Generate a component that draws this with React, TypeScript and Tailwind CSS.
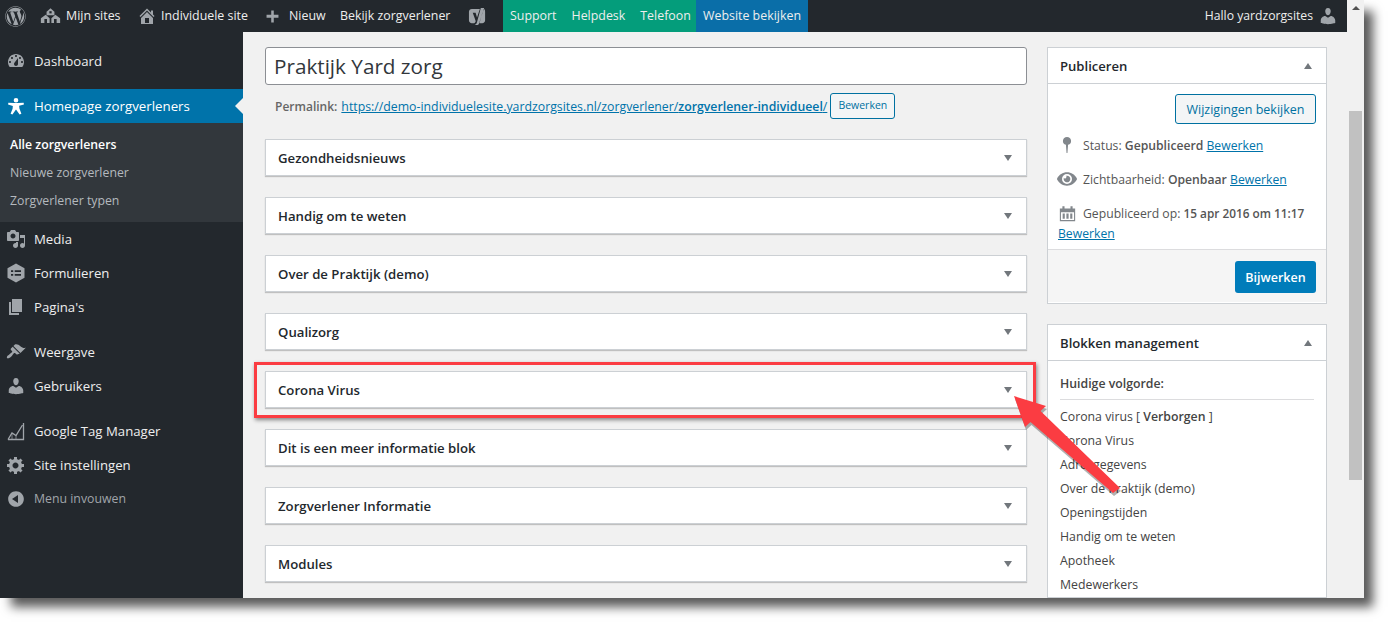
import React from 'react';
import { FaWordpress, FaEye } from 'react-icons/fa';

const font = "font-['Open_Sans','Noto_Sans',sans-serif]";

type IconProps = { className?: string };

// dashicons-style glyphs, the package icons are too far off for these
const icon = (d: string, viewBox = '0 0 20 20') => ({ className = '' }: IconProps) => (
  <svg viewBox={viewBox} className={className} fill="currentColor">
    <path fillRule="evenodd" d={d} />
  </svg>
);

const DashboardIcon = icon(
  'M3.76 16h12.48c1.1-1.37 1.76-3.11 1.76-5 0-4.42-3.58-8-8-8s-8 3.58-8 8c0 1.89.66 3.63 1.76 5zM10 4c.55 0 1 .45 1 1s-.45 1-1 1-1-.45-1-1 .45-1 1-1zM6 6c.55 0 1 .45 1 1s-.45 1-1 1-1-.45-1-1 .45-1 1-1zm8 0c.55 0 1 .45 1 1s-.45 1-1 1-1-.45-1-1 .45-1 1-1zm-5.37 5.55L12 7v6c0 1.1-.9 2-2 2s-2-.9-2-2c0-.57.24-1.08.63-1.45zM4 10c.55 0 1 .45 1 1s-.45 1-1 1-1-.45-1-1 .45-1 1-1zm12 0c.55 0 1 .45 1 1s-.45 1-1 1-1-.45-1-1 .45-1 1-1z'
);
const PersonIcon = icon(
  'M10 1a2.6 2.6 0 1 1 0 5.200A2.600 2.600 0 0 1 10 1zM1.500 6.500 7.500 6.800h5l6-.3.300 1.800-5.300 1.500.3 3L16 18.700l-2 .8-4-5.500-4 5.500-2-.8 2.200-5.700.3-3L1.200 8.300z'
);
const MediaIcon = icon(
  'M13 11V4c0-.55-.45-1-1-1h-1.670L9 1H5L3.670 3H2c-.55 0-1 .45-1 1v7c0 .55.45 1 1 1h10c.55 0 1-.45 1-1zM7 4.500c1.380 0 2.500 1.120 2.500 2.500S8.380 9.500 7 9.500 4.500 8.380 4.500 7 5.620 4.500 7 4.500zM14 6h5v10.500c0 1.380-1.120 2.500-2.500 2.500S14 17.880 14 16.500s1.120-2.500 2.500-2.500c.54 0 1 .2 1.500.5V9h-4V6zm-4 8.050V13h2v3.500c0 1.380-1.120 2.500-2.500 2.500S7 17.880 7 16.500 8.120 14 9.500 14c.16 0 .34.02.5.05z'
);
const FormsIcon = icon(
  'M10 .5l8.500 4.700v9.600L10 19.500l-8.500-4.700V5.200L10 .5zM5 7.200v1.900h2.200V7.200H5zm3.700 0v1.900H15V7.200H8.700zM5 10.900v1.900h2.200v-1.900H5zm3.700 0v1.900H15v-1.900H8.700z'
);
const PagesIcon = icon('M6 15V2h10v13H6zm-1 1h8v2H3V5h2v11z');
const BrushIcon = icon(
  'M14.48 11.06L7.41 3.99l1.5-1.5c.5-.56 2.3-.47 3.51.32 1.21.8 1.43 1.28 2.91 2.1 1.18.64 2.45 1.26 4.45.85zm-.71.71L6.7 4.7 4.93 6.47c-.39.39-.39 1.02 0 1.41l1.06 1.06c.39.39.39 1.03 0 1.42-.6.6-1.43 1.11-2.21 1.69-.35.26-.7.53-1.01.84C1.43 13.23.48 14.68 1 16.22c1.54.52 2.99-.43 4.34-1.78.31-.31.58-.66.84-1.01.58-.78 1.09-1.61 1.69-2.21.39-.39 1.03-.39 1.42 0l1.06 1.06c.39.39 1.02.39 1.41 0z'
);
const UserIcon = icon(
  'M10 9.25c-2.27 0-2.73-3.44-2.73-3.44C7 4.02 7.82 2 9.97 2c2.16 0 2.98 2.02 2.71 3.81 0 0-.41 3.44-2.68 3.44zm0 2.57L12.72 10c2.39 0 4.52 2.33 4.52 4.53v2.49s-3.65 1.13-7.24 1.13c-3.65 0-7.24-1.13-7.24-1.13v-2.49c0-2.25 1.94-4.48 4.47-4.48z'
);
const GearIcon = icon(
  'M18 12h-2.18c-.17.7-.44 1.35-.81 1.93l1.54 1.54-2.1 2.1-1.54-1.54c-.58.36-1.23.63-1.91.79V19H8v-2.18c-.68-.16-1.33-.43-1.91-.79l-1.54 1.54-2.12-2.12 1.54-1.54c-.36-.58-.63-1.23-.79-1.91H1V9.03h2.17c.16-.7.44-1.35.8-1.94L2.43 5.55l2.1-2.1 1.54 1.54c.58-.37 1.24-.64 1.93-.81V2h3v2.18c.68.16 1.33.43 1.91.79l1.54-1.54 2.12 2.12-1.54 1.54c.36.59.64 1.24.8 1.94H18V12zm-8.5 1.5c1.66 0 3-1.34 3-3s-1.34-3-3-3-3 1.34-3 3 1.34 3 3 3z'
);
const CollapseIcon = icon(
  'M10 2.160c4.330 0 7.840 3.510 7.840 7.840s-3.510 7.840-7.840 7.840S2.160 14.330 2.160 10 5.670 2.160 10 2.160zm2 11.840V6l-6 4z'
);
const HomeIcon = icon(
  'M16 8.500l1.530 1.530-1.060 1.060L10 4.620l-6.470 6.470-1.060-1.060L10 2.500l4 4v-2h2v4zm-6-2.460l6 5.990V18H4v-5.970zM12 17v-5H8v5h4z'
);
const PlusIcon = icon('M17 8v3.500h-5.500V17H8.500v-5.500H3V8h5.500V3h3v5z');
const YoastIcon = icon(
  'M4 2h8.500L11 6.500 9.500 11 8 6H5l3 8.500c.3.900-.3 2-1.500 2.500H4c-1.700 0-3-1.300-3-3V5c0-1.700 1.300-3 3-3zM13.500 1H17l-5.500 16.500c-.3.800-1 1.500-2 1.500H7c1.200-.6 2-1.300 2.300-2.300L13.500 1zM15 6.500 17 2c.7.500 1 1.500 1 3v9c0 1.700-1.300 3-3 3h-3l3-10.500z'
);
const PinIcon = icon('M10 1a4.500 4.500 0 0 1 1.200 8.840L10.500 19h-1L8.800 9.840A4.500 4.500 0 0 1 10 1z');
const CalendarIcon = icon(
  'M1 4h3V1.500h2.500V4h7V1.500H16V4h3v15H1V4zm1.300 4.500v9.200h15.400V8.500H2.300zM4.300 10h2.500v6.300H4.300zM8.700 10h2.600v6.300H8.700zM13.200 10h2.500v6.300h-2.500z'
);

const SitesIcon = ({ className = '' }: IconProps) => (
  <svg viewBox="0 0 24 20" className={className} fill="currentColor">
    <path d="M12 1l4.500 4.200V9h-9V5.200L12 1z" />
    <path d="M6.500 8.500 11 12.500V18H1v-5.500l5.500-4zM17.500 8.500l5.500 4V18H13v-5.500l4.500-4z" />
    <path d="M5 13.500h3V18H5zM16 13.500h3V18h-3z" fill="#23282d" />
    <path d="M10.700 4.500h2.600v2.500h-2.600z" fill="#23282d" />
  </svg>
);

const ChartIcon = ({ className = '' }: IconProps) => (
  <svg viewBox="0 0 20 20" className={className} fill="none" stroke="currentColor" strokeWidth="1.300">
    <path d="M2 18.500h15.500V2" />
    <path d="M2 18.500 6 12l4 2.500L16.500 4" />
    <path d="M6 12v6.500M10 14.500v4" strokeWidth=".7" />
  </svg>
);

const Caret = ({ up = false }: { up?: boolean }) => (
  <span
    className={`block w-0 h-0 border-x-[4px] border-x-transparent ${
      up ? 'border-b-[6px] border-b-[#72777c]' : 'border-t-[6px] border-t-[#72777c]'
    }`}
  />
);

const TopItem = ({ children, className = '' }: { children: React.ReactNode; className?: string }) => (
  <div className={`flex items-center h-8 text-[12.400px] text-[#eee] whitespace-nowrap ${className}`}>{children}</div>
);

const TopBar = () => (
  <div className="flex items-center justify-between h-8 bg-[#23282d] shrink-0">
    <div className="flex items-center">
      <TopItem className="w-[40px] pl-[5px]">
        <FaWordpress className="w-[21px] h-[21px] text-[#a0a5aa]" />
      </TopItem>
      <TopItem className="w-[97px]">
        <SitesIcon className="w-[21px] h-[18px] text-[#a0a5aa] mr-[5px]" />
        Mijn sites
      </TopItem>
      <TopItem className="w-[129px]">
        <HomeIcon className="w-[20px] h-[20px] text-[#a0a5aa] mr-[4px]" />
        Individuele site
      </TopItem>
      <TopItem className="w-[74px]">
        <PlusIcon className="w-[17px] h-[17px] text-[#a0a5aa] -ml-[2px] mr-[8px]" />
        Nieuw
      </TopItem>
      <TopItem className="w-[128px]">Bekijk zorgverlener</TopItem>
      <TopItem className="w-[35px]">
        <YoastIcon className="w-[19px] h-[19px] text-[#a0a5aa]" />
      </TopItem>
      <TopItem className="bg-[#049d7b] text-[#e6f5f0] w-[193px] pl-[7px] gap-[15px]">
        <span>Support</span>
        <span>Helpdesk</span>
        <span>Telefoon</span>
      </TopItem>
      <TopItem className="bg-[#0a6ea8] text-[#e8f3f8] w-[112px] pl-[7px]">Website bekijken</TopItem>
    </div>
    <TopItem className="pr-[9px]">
      <span className="text-[12.200px]">Hallo yardzorgsites</span>
      <UserIcon className="w-[20px] h-[20px] text-[#a0a5aa] ml-[5px]" />
    </TopItem>
  </div>
);

const MenuRow = ({
  icon: Icon,
  label,
  muted = false,
}: {
  icon: React.ComponentType<IconProps>;
  label: string;
  muted?: boolean;
}) => (
  <div className={`flex items-center h-[34px] ${muted ? 'text-[12.300px] text-[#a0a5aa]' : 'text-[13.200px] text-[#eee]'}`}>
    <span className="flex justify-center w-[32px] mr-[2px]">
      <Icon className="w-[20px] h-[20px] text-[#a0a5aa]" />
    </span>
    <span className="pt-px">{label}</span>
  </div>
);

const Sidebar = () => (
  <aside className="w-[243px] shrink-0 bg-[#23282d] pt-3">
    <MenuRow icon={DashboardIcon} label="Dashboard" />
    <div className="relative mt-[11px] flex items-center h-[34px] bg-[#0073aa] text-[13.300px] text-white">
      <span className="flex justify-center w-[32px] mr-[2px]">
        <PersonIcon className="w-[18px] h-[18px]" />
      </span>
      <span className="pt-px">Homepage zorgverleners</span>
      <span className="absolute right-0 top-[9px] w-0 h-0 border-y-[8px] border-y-transparent border-r-[8px] border-r-[#f1f1f1]" />
    </div>
    <div className="bg-[#32373c] pt-[8px] pb-[7px] text-[12.300px]">
      <div className="flex items-center h-7 pl-[10px] font-semibold text-white">Alle zorgverleners</div>
      <div className="flex items-center h-7 pl-[10px] text-[#b4b9be]">Nieuwe zorgverlener</div>
      <div className="flex items-center h-7 pl-[10px] text-[#b4b9be]">Zorgverlener typen</div>
    </div>
    <MenuRow icon={MediaIcon} label="Media" />
    <MenuRow icon={FormsIcon} label="Formulieren" />
    <MenuRow icon={PagesIcon} label="Pagina's" />
    <div className="mt-[11px]">
      <MenuRow icon={BrushIcon} label="Weergave" />
      <MenuRow icon={UserIcon} label="Gebruikers" />
    </div>
    <div className="mt-[11px]">
      <MenuRow icon={ChartIcon} label="Google Tag Manager" />
      <MenuRow icon={GearIcon} label="Site instellingen" />
      <MenuRow icon={CollapseIcon} label="Menu invouwen" muted />
    </div>
  </aside>
);

const boxes = [
  'Gezondheidsnieuws',
  'Handig om te weten',
  'Over de Praktijk (demo)',
  'Qualizorg',
  'Corona Virus',
  'Dit is een meer informatie blok',
  'Zorgverlener Informatie',
  'Modules',
];

const order = ['Corona Virus', 'Adresgegevens', 'Over de Praktijk (demo)', 'Openingstijden', 'Handig om te weten', 'Apotheek', 'Medewerkers'];

const linkClass = 'text-[#0073aa] underline';

const Editor = () => (
  <div className="w-[762px] shrink-0">
    <div className="flex items-center h-[38px] pt-[2px] bg-white border border-[#8c8f94] rounded-[3px] pl-2 text-[20.700px] text-[#32373c]">
      Praktijk Yard zorg
    </div>
    <div className="flex items-center h-[26px] mt-2 pl-[10px] text-[12.300px] text-[#666] whitespace-nowrap">
      <span className="font-semibold text-[12px] mr-1 pt-[2px]">Permalink:</span>
      <span className={`pt-[2px] ${linkClass}`}>
        https://demo-individuelesite.yardzorgsites.nl/zorgverlener/<b className="font-semibold">zorgverlener-individueel</b>/
      </span>
      <span className="flex items-center justify-center w-[65px] h-[26px] ml-[3px] border border-[#0071a1] rounded-[3px] bg-[#f3f5f6] text-[10.500px] text-[#0071a1]">
        Bewerken
      </span>
    </div>
    <div className="flex flex-col gap-[21px] mt-5">
      {boxes.map((title) => (
        <div
          key={title}
          className="flex items-center justify-between h-[37px] bg-white border border-[#ccd0d4] shadow-[0_1px_1px_rgba(0,0,0,0.2)] pl-3 pr-[14px] text-[13.200px] font-semibold text-[#23282d]"
        >
          <span className="pt-[2px]">{title}</span>
          <Caret />
        </div>
      ))}
    </div>
  </div>
);

const SideBox = ({ title, children, className = '' }: { title: string; children: React.ReactNode; className?: string }) => (
  <div className={`bg-white border border-[#ccd0d4] ${className}`}>
    <div className="flex items-center justify-between h-[36px] pl-3 pr-[14px] border-b border-[#ccd0d4] text-[13.100px] font-semibold text-[#23282d]">
      <span className="pt-[2px]">{title}</span>
      <Caret up />
    </div>
    {children}
  </div>
);

const MetaRow = ({ icon, children }: { icon: React.ReactNode; children: React.ReactNode }) => (
  <div className="flex items-center h-[20px] text-[12.200px] text-[#555] whitespace-nowrap">
    <span className="flex justify-center w-[18px] mr-[7px] text-[#82878c]">{icon}</span>
    <span className="pt-[2px]">{children}</span>
  </div>
);

const Publish = () => (
  <SideBox title="Publiceren" className="h-[258px]">
    <div className="flex justify-end pt-[10px] pr-[10px]">
      <span className="flex items-center justify-center w-[141px] h-[30px] pt-[2px] border border-[#0071a1] rounded-[3px] bg-[#f3f5f6] text-[12.500px] text-[#0071a1]">
        Wijzigingen bekijken
      </span>
    </div>
    <div className="flex flex-col gap-[14px] pt-[11px] pl-[10px]">
      <MetaRow icon={<PinIcon className="w-[18px] h-[18px]" />}>
        Status: <b className="font-semibold">Gepubliceerd</b> <span className={linkClass}>Bewerken</span>
      </MetaRow>
      <MetaRow icon={<FaEye className="shrink-0 w-[20px] h-[18px]" />}>
        Zichtbaarheid: <b className="font-semibold">Openbaar</b> <span className={linkClass}>Bewerken</span>
      </MetaRow>
      <div>
        <MetaRow icon={<CalendarIcon className="w-[17px] h-[17px]" />}>
          Gepubliceerd op: <b className="font-semibold text-[11.800px]">15 apr 2016 om 11:17</b>
        </MetaRow>
        <div className={`text-[12.200px] h-[20px] leading-5 pt-px ${linkClass}`}>Bewerken</div>
      </div>
    </div>
    <div className="flex justify-end items-center h-[53px] mt-[6px] pr-[10px] border-t border-[#dcdcde] bg-[#f5f5f5]">
      <span className="flex items-center justify-center w-[81px] h-[32px] mt-[2px] pt-[2px] rounded-[3px] bg-[#007cba] text-[12.500px] font-semibold text-white">
        Bijwerken
      </span>
    </div>
  </SideBox>
);

const Blocks = () => (
  <SideBox title="Blokken management" className="mt-5 grow">
    <div className="px-3 pt-[13px] text-[12.300px] text-[#444]">
      <div className="pb-[5px] border-b border-[#dcdcde] font-semibold leading-5">Huidige volgorde:</div>
      <div className="flex items-center h-6 mt-[5px]">
        <span>
          Corona virus [ <b className="font-semibold">Verborgen</b> ]
        </span>
      </div>
      {order.map((item) => (
        <div key={item} className="flex items-center h-6">
          {item}
        </div>
      ))}
    </div>
  </SideBox>
);

const Annotation = () => (
  <>
    <div className="absolute left-[254px] top-[362px] w-[782px] h-[56px] border-[3px] border-[#fb3c42] shadow-[1px_2px_4px_rgba(0,0,0,0.45)] pointer-events-none" />
    <svg className="absolute left-[1000px] top-[385px] w-[130px] h-[120px] pointer-events-none" viewBox="0 0 130 120">
      <path d="M14 11 46 21 40.500 26 120 103 113 108 30.500 37 25 42z" fill="#000" opacity=".3" transform="translate(1 3)" />
      <path d="M14 11 46 21 40.500 26 120 103 113 108 30.500 37 25 42z" fill="#fb3c42" />
    </svg>
  </>
);

const Scrollbar = () => (
  <div className="flex flex-col items-center w-[17px] shrink-0 bg-[#f1f1f1]">
    <span className="block mt-[6px] w-0 h-0 border-x-[4px] border-x-transparent border-b-[4px] border-b-[#505050]" />
    <div className="w-[13px] h-[369px] mt-[101px] bg-[#c1c1c1]" />
  </div>
);

export default function App() {
  return (
    <div className={`relative w-[1394px] h-[628px] bg-white overflow-hidden ${font}`}>
      <div className="flex w-[1364px] h-[598px] shadow-[10px_10px_10px_-1px_rgba(0,0,0,0.65)]">
        <div className="flex flex-col w-[1347px] h-full overflow-hidden">
          <TopBar />
          <div className="flex grow min-h-0">
            <Sidebar />
            <main className="flex grow gap-5 min-w-0 bg-[#f1f1f1] pt-[15px] pl-[22px] pr-5 overflow-hidden">
              <Editor />
              <div className="flex flex-col w-[280px] shrink-0">
                <Publish />
                <Blocks />
              </div>
            </main>
          </div>
        </div>
        <Scrollbar />
      </div>
      <Annotation />
    </div>
  );
}
